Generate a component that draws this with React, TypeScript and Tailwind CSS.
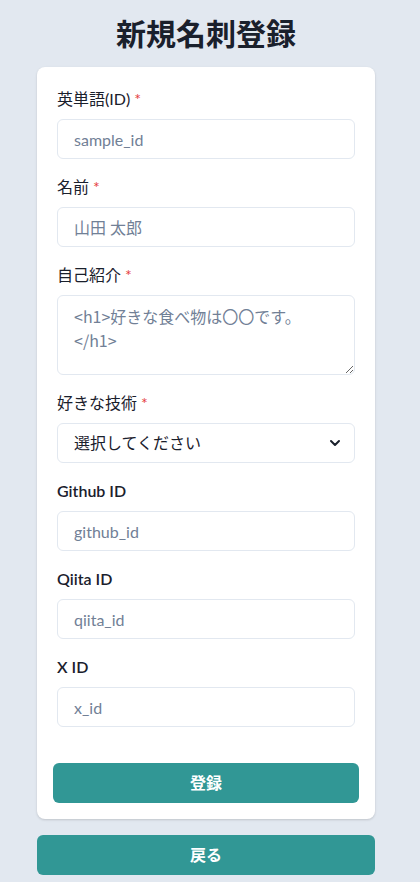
import React, { useState } from "react";

const font = { fontFamily: 'Lato, "Noto Sans CJK JP", sans-serif' };

function Label({ text, required }: { text: string; required?: boolean }) {
  return (
    <label
      className={
        "mb-2 block text-[16px] leading-6 text-[#1a202c] " +
        (required ? "font-normal" : "font-semibold")
      }
    >
      {text}
      {required && <span className="ml-1 text-[#e53e3e]">*</span>}
    </label>
  );
}

const inputCls =
  "block h-10 w-full rounded-md border border-[#e2e8f0] bg-white px-4 text-[16px] text-[#1a202c] placeholder:text-[#718096] focus:outline-none";

export default function App() {
  const [tech, setTech] = useState("");

  return (
    <div className="min-h-screen bg-[#e2e8f0]" style={font}>
      <div className="ml-[37px] w-[338px] pt-[14px] pb-2">
        <h1 className="text-center text-[30px] leading-[38px] font-bold text-[#1a202c]">
          新規名刺登録
        </h1>

        <form className="mt-[15px] rounded-lg bg-white p-4 shadow-[0_1px_3px_rgba(0,0,0,0.1),0_1px_2px_rgba(0,0,0,0.06)]">
          <div className="space-y-4 p-1">
            <div>
              <Label text="英単語(ID)" required />
              <input className={inputCls} placeholder="sample_id" />
            </div>
            <div>
              <Label text="名前" required />
              <input className={inputCls} placeholder="山田 太郎" />
            </div>
            <div>
              <Label text="自己紹介" required />
              <textarea
                className="block h-20 w-full rounded-md border border-[#e2e8f0] bg-white px-4 py-2 font-['Noto_Sans_CJK_JP',sans-serif] text-[16px] leading-6 text-[#1a202c] placeholder:text-[#718096] focus:outline-none"
                placeholder={"<h1>好きな食べ物は〇〇です。\n</h1>"}
              />
            </div>
            <div>
              <Label text="好きな技術" required />
              <div className="relative">
                <select
                  className="block h-10 w-full appearance-none rounded-md border border-[#e2e8f0] bg-white pr-10 pl-4 text-[16px] text-[#1a202c] focus:outline-none"
                  value={tech}
                  onChange={(e) => setTech(e.target.value)}
                >
                  <option value="">選択してください</option>
                  <option value="1">React</option>
                  <option value="2">TypeScript</option>
                  <option value="3">GitHub</option>
                </select>
                <svg
                  viewBox="0 0 24 24"
                  className="pointer-events-none absolute top-1/2 right-3 h-4 w-4 -translate-y-1/2 text-[#1a202c]"
                >
                  <path
                    d="M6 9l6 6 6-6"
                    fill="none"
                    stroke="currentColor"
                    strokeWidth="3"
                    strokeLinecap="round"
                    strokeLinejoin="round"
                  />
                </svg>
              </div>
            </div>
            <div>
              <Label text="Github ID" />
              <input className={inputCls} placeholder="github_id" />
            </div>
            <div>
              <Label text="Qiita ID" />
              <input className={inputCls} placeholder="qiita_id" />
            </div>
            <div>
              <Label text="X ID" />
              <input className={inputCls} placeholder="x_id" />
            </div>
          </div>

          <button
            type="button"
            className="mt-8 block h-10 w-full rounded-md bg-[#319795] text-[16px] font-bold text-white"
          >
            登録
          </button>
        </form>

        <button
          type="button"
          className="mt-4 block h-10 w-full rounded-md bg-[#319795] text-[16px] font-bold text-white"
        >
          戻る
        </button>
      </div>
    </div>
  );
}
